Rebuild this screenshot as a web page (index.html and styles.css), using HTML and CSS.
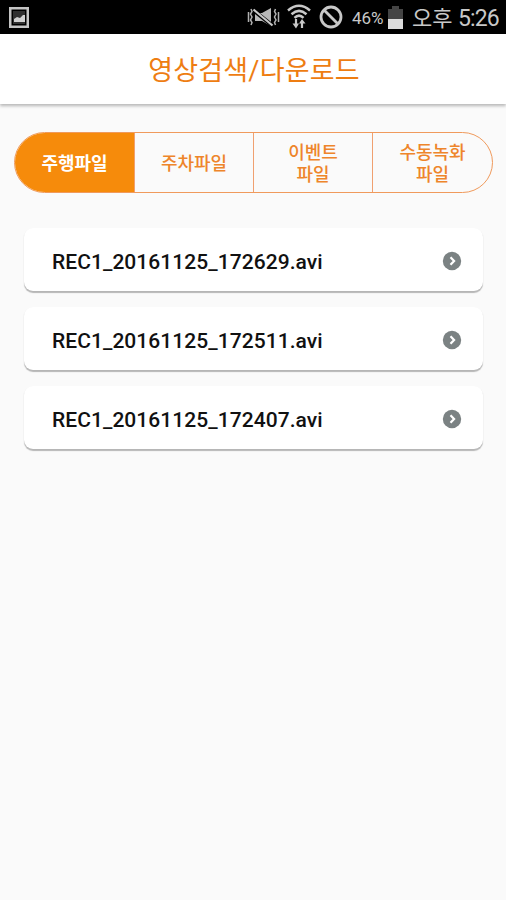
FILE: index.html
```html
<!DOCTYPE html>
<html lang="ko">

<head>
  <meta charset="UTF-8">
  <meta name="viewport" content="width=device-width, initial-scale=1.0">
  <title>영상검색/다운로드</title>
  <link rel="stylesheet" href="styles.css">
</head>

<body>
  <div class="statusbar">
    <svg class="picture" width="20" height="21" viewBox="0 0 20 21">
      <rect x="1.25" y="1.25" width="17.5" height="18.5" fill="none" stroke="#c4c4c4" stroke-width="2.5"/>
      <rect x="4" y="4" width="12" height="13" fill="#303030"/>
      <path d="M5 15v-3l3-2 3 1 3-3h2v7z" fill="#d0d0d0"/>
    </svg>
    <svg class="mute" width="33" height="22" viewBox="0 0 33 22">
      <path d="M8 7h7l9-5v18l-9-5H8z" fill="#b8b8b8"/>
      <path d="M6 4l20 16" stroke="#000" stroke-width="4"/>
      <path d="M6.500 3.500l19 16" stroke="#c8c8c8" stroke-width="2.200"/>
      <path d="M4 3L5 5.500 3.500 8l1.500 3-1.500 3L5 16.500 4 19M1.500 6v10M28.500 3l-1 2.500L29 8l-1.500 3 1.500 3-1.500 2.500 1 2.500M31.500 6v10" fill="none" stroke="#b0b0b0" stroke-width="1.500"/>
    </svg>
    <svg class="wifi" width="24" height="26" viewBox="0 0 24 26">
      <path d="M1 6.500Q12-3 23 6.500M4.500 10.200Q12 3.500 19.500 10.200M7.500 13.800Q12 9.500 16.500 13.800" fill="none" stroke="#c8c8c8" stroke-width="2.500"/>
      <path d="M9 15v7M15 24v-7" stroke="#c8c8c8" stroke-width="2.200"/>
      <path d="M5.500 19.500h6.500l-3 5zM12 19.500h6.500l-3.500-4.500z" fill="#c8c8c8"/>
    </svg>
    <svg class="block" width="24" height="24" viewBox="0 0 24 24">
      <circle cx="12" cy="12" r="10" fill="none" stroke="#c8c8c8" stroke-width="2.800"/>
      <path d="M5 5l14 14" stroke="#c8c8c8" stroke-width="2.800"/>
    </svg>
    <span class="percent">46%</span>
    <svg class="battery" width="15" height="23" viewBox="0 0 15 23">
      <path d="M0 3h4V0h7v3h4v10H0z" fill="#454545"/>
      <path d="M0 13h15v10H0z" fill="#dcdcdc"/>
    </svg>
    <span class="ampm">오후</span>
    <span class="time">5:26</span>
  </div>

  <header>
    <h1>영상검색/다운로드</h1>
  </header>

  <nav class="tabs">
    <button class="active">주행파일</button>
    <button>주차파일</button>
    <button>이벤트<br>파일</button>
    <button>수동녹화<br>파일</button>
  </nav>

  <div class="files">
    <div class="file">
      <span>REC1_20161125_172629.avi</span>
      <svg width="20" height="20" viewBox="0 0 20 20">
        <circle cx="10" cy="10" r="9.200" fill="#7b8283"/>
        <path d="M8.500 6.200l3.600 3.800-3.600 3.800" fill="none" stroke="#fff" stroke-width="2.200"/>
      </svg>
    </div>
    <div class="file">
      <span>REC1_20161125_172511.avi</span>
      <svg width="20" height="20" viewBox="0 0 20 20">
        <circle cx="10" cy="10" r="9.200" fill="#7b8283"/>
        <path d="M8.500 6.200l3.600 3.800-3.600 3.800" fill="none" stroke="#fff" stroke-width="2.200"/>
      </svg>
    </div>
    <div class="file">
      <span>REC1_20161125_172407.avi</span>
      <svg width="20" height="20" viewBox="0 0 20 20">
        <circle cx="10" cy="10" r="9.200" fill="#7b8283"/>
        <path d="M8.500 6.200l3.600 3.800-3.600 3.800" fill="none" stroke="#fff" stroke-width="2.200"/>
      </svg>
    </div>
  </div>
</body>
</html>
```
FILE: styles.css
```css
* {
  box-sizing: border-box;
}

body {
  font-family: Roboto, "Noto Sans CJK KR", sans-serif;
  margin: 0;
  min-height: 100vh;
  background-color: #fafafa;
  color: #111111;
}

.statusbar {
  display: flex;
  align-items: center;
  height: 34px;
  padding: 0 8px 0 9px;
  background-color: #000000;
  color: #c8c8c8;
  white-space: nowrap;
}

.statusbar svg {
  flex: none;
}

.mute {
  margin-left: auto;
}

.wifi {
  margin-left: 7px;
}

.block {
  margin-left: 8px;
}

.percent {
  width: 32px;
  margin-left: 9px;
  font-size: 17px;
  padding-top: 2px;
}

.battery {
  margin-left: 4px;
}

.ampm {
  width: 41px;
  margin-left: 9px;
  padding-top: 3px;
  font-size: 22px;
  line-height: 30px;
}

.time {
  width: 40px;
  margin-left: 5px;
  font-size: 23px;
  letter-spacing: -0.9px;
  padding-top: 3px;
}

header {
  height: 70px;
  background-color: #ffffff;
  text-align: center;
  box-shadow: 0 2px 3px rgba(0, 0, 0, 0.27);
}

h1 {
  margin: 0;
  padding: 2px 0 0 2px;
  font-size: 27px;
  font-weight: 400;
  letter-spacing: 0.2px;
  line-height: 70px;
  color: #ee7d12;
}

.tabs {
  display: grid;
  grid-template-columns: 119px 119px 119px 1fr;
  height: 61px;
  margin: 28px 13px 0 14px;
  border: 1px solid #f09a5c;
  border-radius: 31px;
  overflow: hidden;
}

.tabs button {
  padding: 3px 0 0;
  border: none;
  border-left: 1px solid #f0a070;
  background: none;
  font-family: inherit;
  font-size: 18px;
  font-weight: 500;
  line-height: 22px;
  color: #ee852b;
}

.tabs .active {
  border-left: none;
  background-color: #f68b0b;
  font-weight: 700;
  color: #ffffff;
}

.files {
  display: flex;
  flex-direction: column;
  gap: 16px;
  margin: 35px 23px 0 24px;
}

.file {
  display: flex;
  align-items: center;
  justify-content: space-between;
  height: 63px;
  padding: 3px 21px 0 28px;
  background-color: #ffffff;
  border-radius: 9px;
  box-shadow: 0 1.5px 1px rgba(0, 0, 0, 0.27);
  font-size: 21px;
  font-weight: 500;
  letter-spacing: 0.05px;
}

.file span {
  padding-top: 1px;
}
```
